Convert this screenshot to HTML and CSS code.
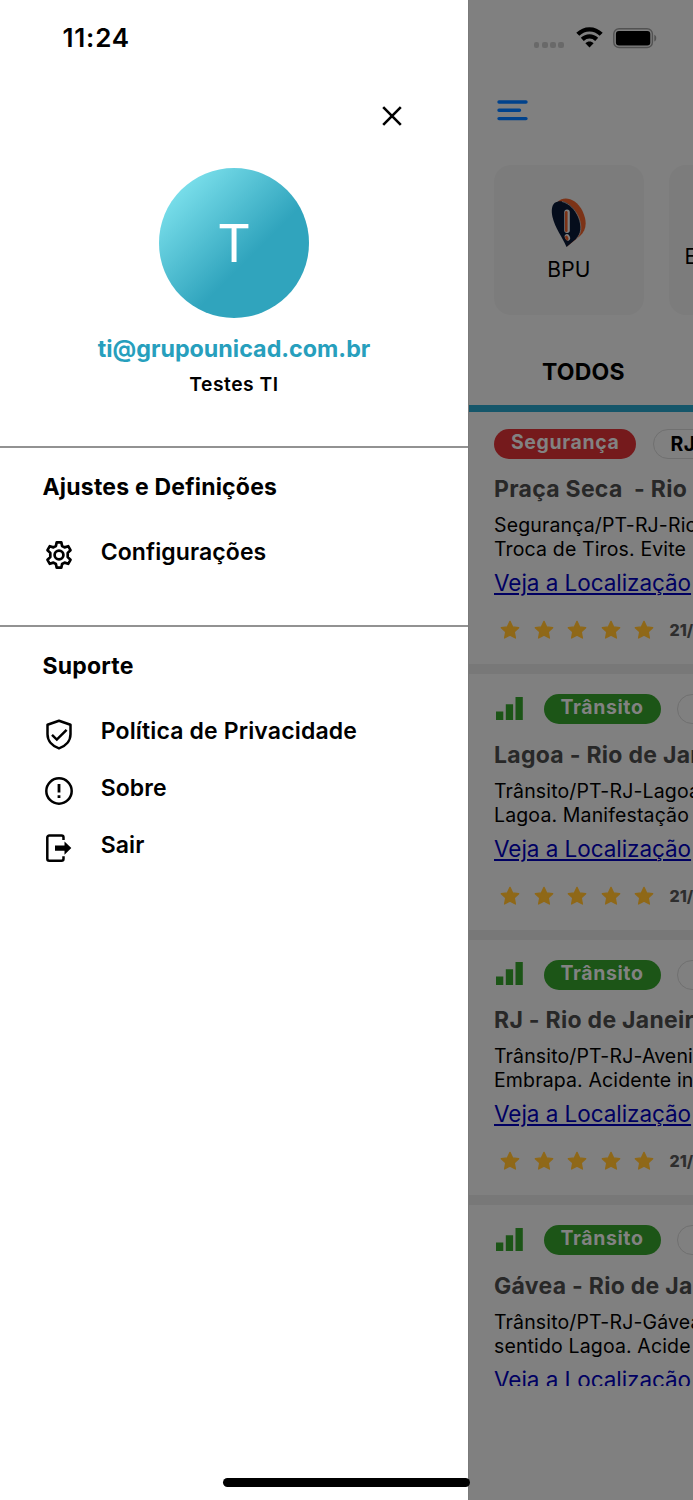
FILE: index.html
```html
<!DOCTYPE html>
<html lang="pt-BR">
<head>
<meta charset="utf-8">
<title>Menu</title>
<link rel="stylesheet" href="styles.css">
</head>
<body>
<svg class="defs" width="0" height="0">
  <symbol id="star" viewBox="0 0 20 20"><path d="M10 1.4 12.6 6.9 18.7 7.7 14.3 11.9 15.4 18 10 15.100 4.600 18 5.700 11.900 1.300 7.700 7.400 6.900Z" fill="#8f6818" stroke="#8f6818" stroke-width="1.300" stroke-linejoin="round"/></symbol>
  <symbol id="bars" viewBox="0 0 27 23"><path d="M0 14.500h7.300V23H0zM9.800 7.300h7.300V23H9.800zM19.500 0h7.300v23h-7.300z" fill="#1c5517"/></symbol>
</svg>
<div class="screen">
  <aside class="drawer">
    <div class="clock"><span>11:24</span></div>
    <div class="close-row">
      <svg width="20" height="20" viewBox="0 0 20 20"><path d="M1.200 1.200 18.800 18.800M18.800 1.200 1.200 18.800" stroke="#000" stroke-width="2.600" fill="none"/></svg>
    </div>
    <div class="profile">
      <div class="avatar">T</div>
      <div class="email">ti@grupounicad.com.br</div>
      <div class="name">Testes TI</div>
    </div>
    <section class="group settings">
      <h2>Ajustes e Definições</h2>
      <div class="item">
        <svg width="30" height="30" viewBox="0 0 30 30" fill="none" stroke="#000" stroke-width="2.700" stroke-linejoin="round"><path d="M12.700 2.300h4.600l.8 3.700 2.500 1.400 3.600-1.200 2.300 4-2.800 2.700v4.200l2.800 2.700-2.300 4-3.600-1.200-2.500 1.400-.8 3.700h-4.600l-.8-3.700-2.500-1.400-3.600 1.200-2.300-4 2.800-2.700v-4.200l-2.800-2.700 2.300-4 3.600 1.200 2.500-1.400z"/><circle cx="15" cy="15" r="4.400"/></svg>
        <span>Configurações</span>
      </div>
    </section>
    <section class="group support">
      <h2>Suporte</h2>
      <div class="item">
        <svg width="30" height="32" viewBox="0 0 30 32" fill="none" stroke="#000" stroke-width="2.500"><path d="M15 1.700 26.500 5.800v9.500c0 6.500-4.800 11.800-11.500 14.100C8.300 27.100 3.500 21.800 3.500 15.300V5.800z" stroke-linejoin="round"/><path d="m8 15.900 4.800 4.700 9.800-9.800"/></svg>
        <span class="policy">Política de Privacidade</span>
      </div>
      <div class="item">
        <svg width="30" height="30" viewBox="0 0 30 30" fill="none" stroke="#000" stroke-width="2.500"><circle cx="15" cy="15" r="12.700"/><path d="M15 8v8.500M15 19.200v2.800" stroke-width="2.800"/></svg>
        <span>Sobre</span>
      </div>
      <div class="item">
        <svg width="30" height="30" viewBox="0 0 30 30"><path d="M19.500 7V4.500a2 2 0 0 0-2-2H5.300a2 2 0 0 0-2 2v21.200a2 2 0 0 0 2 2h12.200a2 2 0 0 0 2-2v-2.500" fill="none" stroke="#000" stroke-width="2.500"/><path d="M11 12.500h9.500V8.400L27.300 15.100 20.500 21.800v-4H11z" fill="#000"/></svg>
        <span>Sair</span>
      </div>
    </section>
  </aside>
  <main class="app">
    <div class="status">
      <div class="dots"><i></i><i></i><i></i><i></i></div>
      <svg class="wifi" width="27" height="21" viewBox="0 0 27 21"><g fill="none" stroke="#000" stroke-width="4.300"><path d="M1.800 7.300C8.500.7 18.500.7 25.200 7.300"/><path d="M6.300 12.400c4.200-4 10.200-4 14.400 0"/></g><path d="M9.400 16.300c2.300-2.300 5.900-2.300 8.200 0L13.500 20.500z" fill="#000"/></svg>
      <svg class="battery" width="45" height="21" viewBox="0 0 45 21"><rect x=".8" y=".8" width="38.600" height="18.700" rx="5.300" fill="none" stroke="#525252" stroke-width="1.400"/><rect x="2.900" y="2.900" width="34.400" height="14.500" rx="3" fill="#000"/><path d="M41.300 6.800c2.600.7 2.600 5.900 0 6.700z" fill="#525252"/></svg>
    </div>
    <div class="menu-row">
      <svg width="31" height="21" viewBox="0 0 31 21"><path d="M2 2h27M2 10.300h20.500M2 18.600h27" stroke="#00428c" stroke-width="3.400" stroke-linecap="round"/></svg>
    </div>
    <div class="tiles">
      <div class="tile">
        <svg width="36" height="52" viewBox="0 0 36 52"><path d="M7 4.500C13-1.500 25 1 31.500 14c5 11 4 19-2.500 25L16 49.500z" fill="#7c3317"/><path d="M3.500 6C11 1 22 7 27.500 20c4 10 2.500 17-2 21.500L15.500 50C11.500 40 4 31 1.500 20 .3 14 .5 9 3.500 6z" fill="#050d1c"/><path d="M11 4.500c7.500 2 13 8 16.500 15.500 4 10 2.500 17-2 21.500" fill="none" stroke="#777" stroke-width=".7"/><rect x="13.300" y="12.500" width="5.500" height="23.500" rx="2.700" fill="#808080"/><rect x="14" y="14" width="2.600" height="21" rx="1.300" fill="#7c3317"/><ellipse cx="16.400" cy="40.300" rx="2.500" ry="3.400" transform="rotate(-25 16.400 40.300)" fill="#808080"/><ellipse cx="15.800" cy="41" rx="1.500" ry="2.500" transform="rotate(-25 15.800 41)" fill="#7c3317"/></svg>
        <span>BPU</span>
      </div>
      <div class="tile next"><span>E</span></div>
    </div>
    <div class="tab"><span>TODOS</span></div>
    <div class="feed">
      <article class="post first">
        <div class="tags"><div class="badge red"><span>Segurança</span></div><div class="uf"><span>RJ</span></div></div>
        <h3>Praça Seca&nbsp; - Rio</h3>
        <p>Segurança/PT-RJ-Rio<br>Troca de Tiros. Evite</p>
        <a>Veja a Localização</a>
        <div class="rate"><svg><use href="#star"/></svg><svg><use href="#star"/></svg><svg><use href="#star"/></svg><svg><use href="#star"/></svg><svg><use href="#star"/></svg><time>21/</time></div>
      </article>
      <article class="post">
        <div class="tags"><svg class="bars"><use href="#bars"/></svg><div class="badge green"><span>Trânsito</span></div><div class="uf"></div></div>
        <h3>Lagoa - Rio de Jan</h3>
        <p>Trânsito/PT-RJ-Lagoa<br>Lagoa. Manifestação</p>
        <a>Veja a Localização</a>
        <div class="rate"><svg><use href="#star"/></svg><svg><use href="#star"/></svg><svg><use href="#star"/></svg><svg><use href="#star"/></svg><svg><use href="#star"/></svg><time>21/</time></div>
      </article>
      <article class="post">
        <div class="tags"><svg class="bars"><use href="#bars"/></svg><div class="badge green"><span>Trânsito</span></div><div class="uf"></div></div>
        <h3>RJ - Rio de Janeir</h3>
        <p>Trânsito/PT-RJ-Aveni<br>Embrapa. Acidente in</p>
        <a>Veja a Localização</a>
        <div class="rate"><svg><use href="#star"/></svg><svg><use href="#star"/></svg><svg><use href="#star"/></svg><svg><use href="#star"/></svg><svg><use href="#star"/></svg><time>21/</time></div>
      </article>
      <article class="post">
        <div class="tags"><svg class="bars"><use href="#bars"/></svg><div class="badge green"><span>Trânsito</span></div><div class="uf"></div></div>
        <h3>Gávea - Rio de Ja</h3>
        <p>Trânsito/PT-RJ-Gávea<br>sentido Lagoa. Acide</p>
        <a>Veja a Localização</a>
      </article>
    </div>
  </main>
  <div class="home-bar"></div>
</div>
</body>
</html>
```
FILE: styles.css
```css
* { box-sizing: border-box; }
body { margin: 0; font-family: Inter, "Liberation Sans", sans-serif; color: #000; background: #fff; }
svg { display: block; flex: none; }
.defs { position: absolute; }
.screen { position: relative; display: flex; width: 693px; height: 1500px; overflow: hidden; }

.drawer { width: 468px; flex: none; background: #fff; }
.clock { height: 76px; padding-left: 62.5px; line-height: 76px; font-size: 26px; font-weight: 600; letter-spacing: .8px; }
.close-row { height: 91.5px; padding: 30px 66.5px 0 0; display: flex; justify-content: flex-end; }
.profile { height: 278.5px; display: flex; flex-direction: column; align-items: center; }
.avatar { width: 150.5px; height: 150.5px; border-radius: 50%; background: linear-gradient(135deg, #7fe3ee 10%, #30a4bd 60%); color: #fff; font-size: 52px; line-height: 152px; text-align: center; }
.email { margin-top: 14px; height: 34px; line-height: 34px; font-size: 23.3px; font-weight: 700; color: #279fbd; white-space: nowrap; }
.name { margin-top: 4px; height: 28px; line-height: 29px; font-size: 19.3px; font-weight: 600; letter-spacing: .5px; }
.group { border-top: 2px solid #929292; padding-left: 42.5px; }
.settings { height: 179px; padding-top: 24px; }
.support { padding-top: 24px; }
.group h2 { margin: 0 0 35.5px; height: 30px; line-height: 30px; font-size: 23px; font-weight: 700; letter-spacing: .2px; white-space: nowrap; }
.item { height: 30px; margin-bottom: 27px; display: flex; align-items: flex-start; gap: 27px; font-size: 23px; line-height: 28px; font-weight: 580; letter-spacing: .1px; }
.item svg { margin: 2px 0 0 1.200px; }
.item span { white-space: nowrap; }
.item .policy { letter-spacing: .15px; }

.app { width: 225px; flex: none; background: #808080; overflow: hidden; border-left: 1px solid #7a7a7a; }
.status { height: 76px; display: flex; padding-left: 64.500px; }
.dots { display: flex; gap: 2.500px; width: 42px; padding-top: 42px; }
.dots i { width: 5.800px; height: 6px; border-radius: 2px; background: #696969; }
.wifi { margin: 27.300px 10.500px 0 0; }
.battery { margin-top: 28px; }
.menu-row { height: 88.500px; padding: 24.300px 0 0 27.700px; }
.tiles { display: flex; gap: 25px; padding-left: 25px; height: 177px; }
.tile { width: 150px; height: 150px; flex: none; border-radius: 17px; background: #7c7c7c; display: flex; flex-direction: column; align-items: center; padding-top: 32px; font-size: 21px; line-height: 25px; }
.tile span { margin-top: 8px; letter-spacing: .2px; }
.tile.next { align-items: flex-start; padding: 79px 0 0 15.500px; }
.tile.next span { margin: 0; }
.tab { height: 70.500px; border-bottom: 7px solid #15566a; padding: 14px 0 0 73px; line-height: 32px; font-size: 23px; font-weight: 650; letter-spacing: .2px; }
.feed { height: 974px; overflow: hidden; }
.post { height: 265.600px; padding: 20px 0 0 25px; border-bottom: 10px solid #787878; white-space: nowrap; }
.post.first { height: 262px; padding-top: 16.500px; }
.tags { display: flex; height: 30px; }
.bars { width: 27px; height: 23px; margin: 2.500px 20.500px 0 2px; }
.badge { flex: none; height: 30px; border-radius: 15px; margin-right: 16.500px; padding-left: 17px; font-size: 19.500px; line-height: 27.500px; font-weight: 680; letter-spacing: .6px; color: #828282; }
.red { width: 142px; background: #751a1c; }
.green { width: 117px; background: #1c5517; }
.uf { width: 70px; flex: none; border: 1.500px solid #707070; border-radius: 15px; padding-left: 17px; font-size: 19.500px; font-weight: 700; line-height: 28px; letter-spacing: .4px; }
.post h3 { margin: 15.500px 0 0; height: 32px; line-height: 31.500px; font-size: 23px; font-weight: 700; letter-spacing: .28px; color: #282828; }
.post p { margin: 7px 0 0; height: 48.500px; line-height: 24.200px; font-size: 19.500px; letter-spacing: .14px; }
.post a { display: block; height: 36px; margin-top: 3.500px; line-height: 35.500px; font-size: 22.500px; letter-spacing: -.05px; color: #000062; text-decoration: underline; text-decoration-thickness: 1.500px; text-underline-offset: 2px; }
.rate { display: flex; gap: 13.600px; margin-top: 19px; padding-left: 6px; height: 20px; }
.rate svg { width: 20px; height: 20px; }
.rate time { font-size: 16px; font-weight: 800; line-height: 20px; color: #2e2e2e; margin-left: 1.500px; }
.home-bar { position: absolute; left: 222.5px; top: 1478px; width: 247.5px; height: 8.500px; border-radius: 5px; background: #000; }
```
